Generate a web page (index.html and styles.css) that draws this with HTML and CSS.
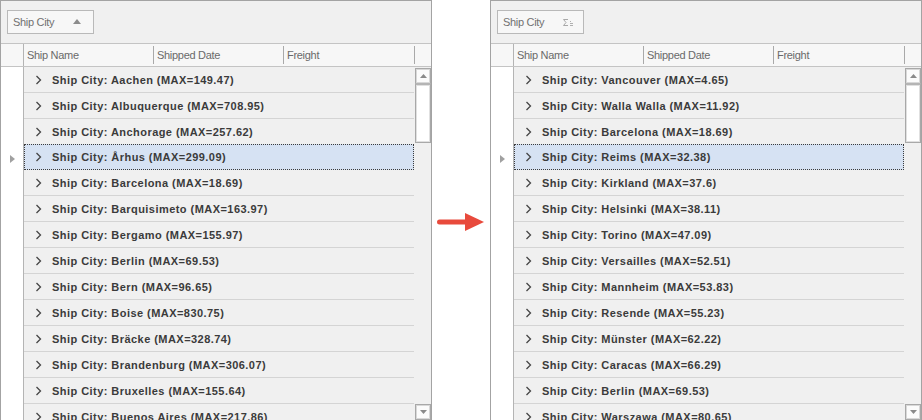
FILE: index.html
```html
<!DOCTYPE html>
<html>
<head>
<meta charset="utf-8">
<link rel="stylesheet" href="styles.css">
</head>
<body>
<div class="stage">
  <div class="grid">
    <div class="group-panel">
      <div class="group-btn"><span class="gb-text">Ship City</span>
        <svg class="sort-up" width="8" height="5" viewBox="0 0 8 5"><polygon points="0,5 8,5 4,0" fill="#8c8c8c"/></svg>
      </div>
    </div>
    <div class="header">
      <div class="h-ind"></div>
      <div class="h-cell w130">Ship Name</div>
      <div class="h-cell w130">Shipped Date</div>
      <div class="h-cell w131">Freight</div>
    </div>
    <div class="body">
      <div class="ind-col">
        <svg class="ind-tri" width="5" height="8" viewBox="0 0 5 8"><polygon points="0,0 5,4 0,8" fill="#a0a0a0"/></svg>
      </div>
      <div class="rows">
        <div class="row"><svg class="chev" width="7" height="10" viewBox="0 0 7 10"><polyline points="1.5,1 5.5,5 1.5,9" fill="none" stroke="#454545" stroke-width="1.3"/></svg><span class="rt">Ship City: Aachen (MAX=149.47)</span></div>
        <div class="row"><svg class="chev" width="7" height="10" viewBox="0 0 7 10"><polyline points="1.5,1 5.5,5 1.5,9" fill="none" stroke="#454545" stroke-width="1.3"/></svg><span class="rt">Ship City: Albuquerque (MAX=708.95)</span></div>
        <div class="row"><svg class="chev" width="7" height="10" viewBox="0 0 7 10"><polyline points="1.5,1 5.5,5 1.5,9" fill="none" stroke="#454545" stroke-width="1.3"/></svg><span class="rt">Ship City: Anchorage (MAX=257.62)</span></div>
        <div class="row sel"><svg class="chev" width="7" height="10" viewBox="0 0 7 10"><polyline points="1.5,1 5.5,5 1.5,9" fill="none" stroke="#454545" stroke-width="1.3"/></svg><span class="rt">Ship City: Århus (MAX=299.09)</span></div>
        <div class="row"><svg class="chev" width="7" height="10" viewBox="0 0 7 10"><polyline points="1.5,1 5.5,5 1.5,9" fill="none" stroke="#454545" stroke-width="1.3"/></svg><span class="rt">Ship City: Barcelona (MAX=18.69)</span></div>
        <div class="row"><svg class="chev" width="7" height="10" viewBox="0 0 7 10"><polyline points="1.5,1 5.5,5 1.5,9" fill="none" stroke="#454545" stroke-width="1.3"/></svg><span class="rt">Ship City: Barquisimeto (MAX=163.97)</span></div>
        <div class="row"><svg class="chev" width="7" height="10" viewBox="0 0 7 10"><polyline points="1.5,1 5.5,5 1.5,9" fill="none" stroke="#454545" stroke-width="1.3"/></svg><span class="rt">Ship City: Bergamo (MAX=155.97)</span></div>
        <div class="row"><svg class="chev" width="7" height="10" viewBox="0 0 7 10"><polyline points="1.5,1 5.5,5 1.5,9" fill="none" stroke="#454545" stroke-width="1.3"/></svg><span class="rt">Ship City: Berlin (MAX=69.53)</span></div>
        <div class="row"><svg class="chev" width="7" height="10" viewBox="0 0 7 10"><polyline points="1.5,1 5.5,5 1.5,9" fill="none" stroke="#454545" stroke-width="1.3"/></svg><span class="rt">Ship City: Bern (MAX=96.65)</span></div>
        <div class="row"><svg class="chev" width="7" height="10" viewBox="0 0 7 10"><polyline points="1.5,1 5.5,5 1.5,9" fill="none" stroke="#454545" stroke-width="1.3"/></svg><span class="rt">Ship City: Boise (MAX=830.75)</span></div>
        <div class="row"><svg class="chev" width="7" height="10" viewBox="0 0 7 10"><polyline points="1.5,1 5.5,5 1.5,9" fill="none" stroke="#454545" stroke-width="1.3"/></svg><span class="rt">Ship City: Bräcke (MAX=328.74)</span></div>
        <div class="row"><svg class="chev" width="7" height="10" viewBox="0 0 7 10"><polyline points="1.5,1 5.5,5 1.5,9" fill="none" stroke="#454545" stroke-width="1.3"/></svg><span class="rt">Ship City: Brandenburg (MAX=306.07)</span></div>
        <div class="row"><svg class="chev" width="7" height="10" viewBox="0 0 7 10"><polyline points="1.5,1 5.5,5 1.5,9" fill="none" stroke="#454545" stroke-width="1.3"/></svg><span class="rt">Ship City: Bruxelles (MAX=155.64)</span></div>
        <div class="row"><svg class="chev" width="7" height="10" viewBox="0 0 7 10"><polyline points="1.5,1 5.5,5 1.5,9" fill="none" stroke="#454545" stroke-width="1.3"/></svg><span class="rt">Ship City: Buenos Aires (MAX=217.86)</span></div>
      </div>
      <div class="vscroll">
        <div class="sb-btn"><svg width="7" height="4" viewBox="0 0 7 4"><polygon points="0,4 7,4 3.5,0" fill="#8a8a8a"/></svg></div>
        <div class="sb-thumb"></div>
        <div class="sb-track"></div>
        <div class="sb-btn"><svg width="7" height="4" viewBox="0 0 7 4"><polygon points="0,0 7,0 3.5,4" fill="#8a8a8a"/></svg></div>
      </div>
    </div>
  </div>

  <div class="arrow-wrap">
    <svg width="48" height="20" viewBox="0 0 48 20"><line x1="2.5" y1="10" x2="30" y2="10" stroke="#e84a3c" stroke-width="5" stroke-linecap="round"/><polygon points="28,1 47,10 28,19" fill="#e84a3c"/></svg>
  </div>

  <div class="grid">
    <div class="group-panel">
      <div class="group-btn"><span class="gb-text">Ship City</span>
        <svg class="sigma" width="11" height="7" viewBox="0 0 11 7"><path d="M5,0.5 H0.5 L3,3.5 L0.5,6.5 H5" fill="none" stroke="#a8a8a8" stroke-width="1"/><path d="M7,2.5 H8 M7,4.5 H10 M7,6.5 H10" stroke="#b0b0b0" stroke-width="1"/></svg>
      </div>
    </div>
    <div class="header">
      <div class="h-ind"></div>
      <div class="h-cell w130">Ship Name</div>
      <div class="h-cell w130">Shipped Date</div>
      <div class="h-cell w131">Freight</div>
    </div>
    <div class="body">
      <div class="ind-col">
        <svg class="ind-tri" width="5" height="8" viewBox="0 0 5 8"><polygon points="0,0 5,4 0,8" fill="#a0a0a0"/></svg>
      </div>
      <div class="rows">
        <div class="row"><svg class="chev" width="7" height="10" viewBox="0 0 7 10"><polyline points="1.5,1 5.5,5 1.5,9" fill="none" stroke="#454545" stroke-width="1.3"/></svg><span class="rt">Ship City: Vancouver (MAX=4.65)</span></div>
        <div class="row"><svg class="chev" width="7" height="10" viewBox="0 0 7 10"><polyline points="1.5,1 5.5,5 1.5,9" fill="none" stroke="#454545" stroke-width="1.3"/></svg><span class="rt">Ship City: Walla Walla (MAX=11.92)</span></div>
        <div class="row"><svg class="chev" width="7" height="10" viewBox="0 0 7 10"><polyline points="1.5,1 5.5,5 1.5,9" fill="none" stroke="#454545" stroke-width="1.3"/></svg><span class="rt">Ship City: Barcelona (MAX=18.69)</span></div>
        <div class="row sel"><svg class="chev" width="7" height="10" viewBox="0 0 7 10"><polyline points="1.5,1 5.5,5 1.5,9" fill="none" stroke="#454545" stroke-width="1.3"/></svg><span class="rt">Ship City: Reims (MAX=32.38)</span></div>
        <div class="row"><svg class="chev" width="7" height="10" viewBox="0 0 7 10"><polyline points="1.5,1 5.5,5 1.5,9" fill="none" stroke="#454545" stroke-width="1.3"/></svg><span class="rt">Ship City: Kirkland (MAX=37.6)</span></div>
        <div class="row"><svg class="chev" width="7" height="10" viewBox="0 0 7 10"><polyline points="1.5,1 5.5,5 1.5,9" fill="none" stroke="#454545" stroke-width="1.3"/></svg><span class="rt">Ship City: Helsinki (MAX=38.11)</span></div>
        <div class="row"><svg class="chev" width="7" height="10" viewBox="0 0 7 10"><polyline points="1.5,1 5.5,5 1.5,9" fill="none" stroke="#454545" stroke-width="1.3"/></svg><span class="rt">Ship City: Torino (MAX=47.09)</span></div>
        <div class="row"><svg class="chev" width="7" height="10" viewBox="0 0 7 10"><polyline points="1.5,1 5.5,5 1.5,9" fill="none" stroke="#454545" stroke-width="1.3"/></svg><span class="rt">Ship City: Versailles (MAX=52.51)</span></div>
        <div class="row"><svg class="chev" width="7" height="10" viewBox="0 0 7 10"><polyline points="1.5,1 5.5,5 1.5,9" fill="none" stroke="#454545" stroke-width="1.3"/></svg><span class="rt">Ship City: Mannheim (MAX=53.83)</span></div>
        <div class="row"><svg class="chev" width="7" height="10" viewBox="0 0 7 10"><polyline points="1.5,1 5.5,5 1.5,9" fill="none" stroke="#454545" stroke-width="1.3"/></svg><span class="rt">Ship City: Resende (MAX=55.23)</span></div>
        <div class="row"><svg class="chev" width="7" height="10" viewBox="0 0 7 10"><polyline points="1.5,1 5.5,5 1.5,9" fill="none" stroke="#454545" stroke-width="1.3"/></svg><span class="rt">Ship City: Münster (MAX=62.22)</span></div>
        <div class="row"><svg class="chev" width="7" height="10" viewBox="0 0 7 10"><polyline points="1.5,1 5.5,5 1.5,9" fill="none" stroke="#454545" stroke-width="1.3"/></svg><span class="rt">Ship City: Caracas (MAX=66.29)</span></div>
        <div class="row"><svg class="chev" width="7" height="10" viewBox="0 0 7 10"><polyline points="1.5,1 5.5,5 1.5,9" fill="none" stroke="#454545" stroke-width="1.3"/></svg><span class="rt">Ship City: Berlin (MAX=69.53)</span></div>
        <div class="row"><svg class="chev" width="7" height="10" viewBox="0 0 7 10"><polyline points="1.5,1 5.5,5 1.5,9" fill="none" stroke="#454545" stroke-width="1.3"/></svg><span class="rt">Ship City: Warszawa (MAX=80.65)</span></div>
      </div>
      <div class="vscroll">
        <div class="sb-btn"><svg width="7" height="4" viewBox="0 0 7 4"><polygon points="0,4 7,4 3.5,0" fill="#8a8a8a"/></svg></div>
        <div class="sb-thumb"></div>
        <div class="sb-track"></div>
        <div class="sb-btn"><svg width="7" height="4" viewBox="0 0 7 4"><polygon points="0,0 7,0 3.5,4" fill="#8a8a8a"/></svg></div>
      </div>
    </div>
  </div>
</div>
</body>
</html>
```

FILE: styles.css
```css
html, body {
  margin: 0;
  padding: 0;
  background: #ffffff;
  overflow: hidden;
}
body {
  width: 922px;
  height: 420px;
  font-family: "Liberation Sans", Arial, sans-serif;
  font-size: 11px;
}
.stage {
  display: flex;
  align-items: flex-start;
  height: 420px;
}
.grid {
  width: 430px;
  height: 440px;
  border: 1px solid #a3a3a3;
  display: flex;
  flex-direction: column;
  flex-shrink: 0;
  background: #f0f0f0;
}
.group-panel {
  height: 42px;
  border-bottom: 1px solid #c4c4c4;
  background: #f0f0f0;
  box-sizing: content-box;
  display: flex;
  align-items: flex-start;
}
.group-btn {
  margin: 9px 0 0 6px;
  width: 68px;
  height: 22px;
  border: 1px solid #b9b9b9;
  background: #f7f7f7;
  display: flex;
  align-items: center;
  justify-content: space-between;
  padding: 0 12px 0 5px;
  box-sizing: content-box;
}
.gb-text {
  color: #717171;
  letter-spacing: -0.3px;
  line-height: 22px;
}
.sort-up {
  margin-top: -1px;
}
.sigma {
  margin-top: 1px;
  margin-right: -3px;
}
.header {
  height: 22px;
  border-bottom: 1px solid #c4c4c4;
  background: #f7f7f7;
  display: flex;
  box-sizing: content-box;
}
.h-ind {
  width: 22px;
  border-right: 1px solid #b4b4b4;
  height: 22px;
}
.h-cell {
  position: relative;
  height: 22px;
  line-height: 22px;
  color: #6a6a6a;
  letter-spacing: -0.3px;
  padding-left: 3px;
  box-sizing: border-box;
}
.h-cell::after {
  content: "";
  position: absolute;
  right: 0;
  top: 2px;
  width: 1px;
  height: 18px;
  background: #a9a9a9;
}
.w130 { width: 130px; }
.w131 { width: 131px; }
.body {
  display: flex;
  flex: 1;
}
.ind-col {
  width: 22px;
  border-right: 1px solid #b4b4b4;
  background: #ffffff;
  display: flex;
  flex-direction: column;
  align-items: flex-start;
}
.ind-tri {
  margin: 88px 0 0 9px;
}
.rows {
  width: 390px;
  display: flex;
  flex-direction: column;
}
.row {
  height: 25px;
  border-bottom: 1px solid #d4d4d4;
  display: flex;
  align-items: center;
  box-sizing: content-box;
  flex-shrink: 0;
}
.row.sel {
  background: #d6e2f3;
  height: 24px;
  border: 1px dotted #3c3c3c;
  margin-top: -1px;
  margin-bottom: 0;
  width: 388px;
}
.row.sel .chev { margin-left: 10px; }
.row.sel .rt { margin-left: 10px; }
.chev {
  margin-left: 11px;
  flex-shrink: 0;
}
.rt {
  margin-left: 10px;
  font-weight: bold;
  color: #3b3b3b;
  letter-spacing: 0.45px;
  white-space: nowrap;
}
.vscroll {
  width: 17px;
  display: flex;
  flex-direction: column;
  padding: 1px 0 0 1px;
  box-sizing: border-box;
  height: 353px;
}
.sb-btn {
  width: 14px;
  height: 14px;
  border: 1px solid #a8a8a8;
  box-shadow: inset 0 0 0 1px #d8d8d8;
  background: #fbfbfb;
  display: flex;
  align-items: center;
  justify-content: center;
  flex-shrink: 0;
}
.sb-thumb {
  width: 14px;
  height: 57px;
  border: 1px solid #a8a8a8;
  border-top: 2px solid #b4b4b4;
  box-shadow: inset 0 0 0 1px #e0e0e0;
  background: #ffffff;
  margin-top: -1px;
  box-sizing: content-box;
}
.sb-track {
  flex: 1;
}
.arrow-wrap {
  width: 58px;
  flex-shrink: 0;
  display: flex;
  justify-content: center;
  padding-top: 212px;
  box-sizing: border-box;
}
```
